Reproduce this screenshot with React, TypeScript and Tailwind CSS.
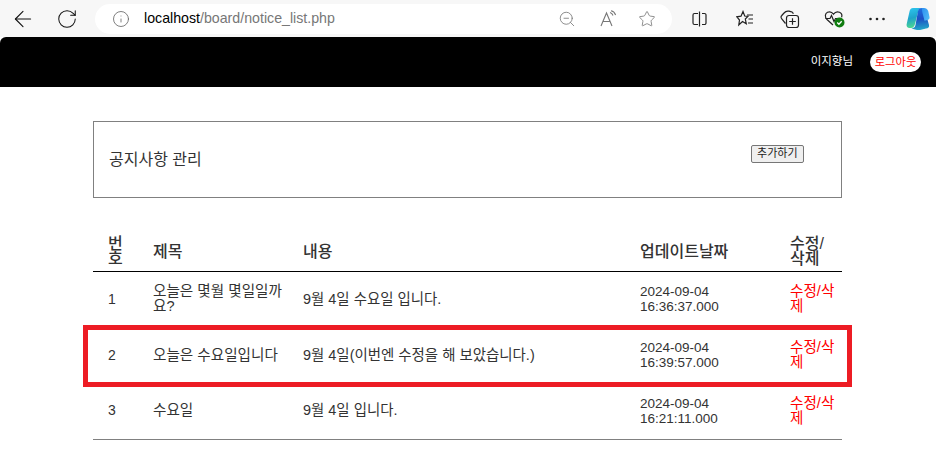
import React from 'react';
import { ArrowLeft, RotateCw, Info, ZoomOut, Star } from 'lucide-react';

const rows = [
  { no: 1, title: '오늘은 몇월 몇일일까요?', body: '9월 4일 수요일 입니다.', date: '2024-09-04', time: '16:36:37.000' },
  { no: 2, title: '오늘은 수요일입니다', body: '9월 4일(이번엔 수정을 해 보았습니다.)', date: '2024-09-04', time: '16:39:57.000' },
  { no: 3, title: '수요일', body: '9월 4일 입니다.', date: '2024-09-04', time: '16:21:11.000' },
];

const ReadAloudIcon = () => (
  <svg width="17" height="17" viewBox="0 0 17 17" fill="none" stroke="#777" strokeWidth="1.1">
    <path d="M1 16 6.500 3 12 16M3 11.500h7" />
    <path d="M10 2.500c1.500.4 2.500 1.500 3 3M11 .8c2.300.5 3.900 2 4.600 4.200" />
  </svg>
);

const SplitIcon = () => (
  <svg width="15" height="16" viewBox="0 0 15 16" fill="none" stroke="#222" strokeWidth="1.200">
    <path d="M6 2.500H2.500A1.500 1.500 0 0 0 1 4v8a1.500 1.500 0 0 0 1.500 1.500H6" />
    <path d="M10 2.500h2.500A1.500 1.500 0 0 1 14 4v8a1.500 1.500 0 0 1-1.500 1.500H10" />
    <path d="M7.500 .5v15" />
  </svg>
);

const FavoritesIcon = () => (
  <svg width="18" height="18" viewBox="0 0 18 18" fill="none" stroke="#222" strokeWidth="1.200">
    <path d="M7 1.500 8.700 6 12 6.300 9.300 9l1 4.700L6.500 11.500 2.800 15l.7-5L.8 6.800l4.200-.6z" />
    <path d="M11 5h6M12.500 9H17M12 13h5" />
  </svg>
);

const CollectionsIcon = () => (
  <svg width="20" height="20" viewBox="0 0 20 20" fill="none" stroke="#222" strokeWidth="1.200">
    <path d="M5.500 14.500 1.800 10c-1-1.300-1-2.500 0-3.500L4 4c1-1.200 3-2.200 5-1.800l2.500.6c1 .3 1.500 1 1.800 2" />
    <rect x="6.500" y="6.500" width="12" height="12" rx="2.500" />
    <path d="M12.500 9.200v6.600M9.200 12.500h6.600" />
  </svg>
);

const HealthIcon = () => (
  <svg width="22" height="20" viewBox="0 0 22 20" fill="none">
    <path d="M9 16 3 10.500C.5 8 1 4.500 3.500 3.300c2.200-1 4.500-.2 6 1.900 1.500-2.100 3.800-2.900 6-1.900 1.900.9 2.800 3 2.100 5" stroke="#222" strokeWidth="1.200" />
    <path d="M1.500 9.500H6l1.500-3 2.500 6 1.500-3h2" stroke="#222" strokeWidth="1.200" />
    <circle cx="15.500" cy="13.500" r="5" fill="#107c10" />
    <path d="m13.200 13.500 1.700 1.700 2.800-3" stroke="#fff" strokeWidth="1.300" />
  </svg>
);

const MoreIcon = () => (
  <svg width="18" height="18" viewBox="0 0 18 18" fill="#222">
    <circle cx="2.500" cy="9" r="1.300" />
    <circle cx="9" cy="9" r="1.300" />
    <circle cx="15.500" cy="9" r="1.300" />
  </svg>
);

const CopilotIcon = () => (
  <svg width="24" height="24" viewBox="0 0 24 24">
    <defs>
      <linearGradient id="cpA" x1="0.3" y1="0" x2="0.5" y2="1">
        <stop offset="0" stopColor="#2cc4ee" />
        <stop offset="0.5" stopColor="#1fa3c9" />
        <stop offset="1" stopColor="#4fdc8c" />
      </linearGradient>
      <linearGradient id="cpB" x1="0.4" y1="0" x2="0.5" y2="1">
        <stop offset="0" stopColor="#1e6fe0" />
        <stop offset="0.5" stopColor="#1c4fc4" />
        <stop offset="1" stopColor="#22a8c8" />
      </linearGradient>
      <linearGradient id="cpC" x1="0" y1="0" x2="1" y2="0.6">
        <stop offset="0" stopColor="#2b8ef0" />
        <stop offset="1" stopColor="#4fb8f5" />
      </linearGradient>
    </defs>
    <path d="M7 1h8c-1.500.4-2.300 1.700-2.700 3.200L9 17c-.6 2.200-1.600 4-4 4H3.500C1.500 21 .4 19.500.6 17.500L3.500 4.500C4 2.300 5 1 7 1z" fill="url(#cpA)" />
    <path d="M12 4c.5-1.800 1.600-3 3.500-3 1.800 0 3 1 3.500 3l4 14c.5 2-.8 3.500-3 3.500l-6 1.500c-3 .2-6-.5-8.500-2 2.500.5 3.500-1 4-3z" fill="url(#cpB)" />
    <path d="M15.500 1H18c1.800 0 3.500 1 4.200 3l1.300 6c.3 1.500-.5 2.500-2 3l-3 .8L16.500 6c-.5-2-.4-4-1-5z" fill="url(#cpC)" />
  </svg>
);

const Toolbar = () => (
  <div className="flex h-[37px] items-center bg-[#f7f7f7]">
    <div className="flex w-[95px] shrink-0 items-center pl-[10px]">
      <ArrowLeft size={26} strokeWidth={1} className="text-[#111]" />
      <RotateCw size={22} strokeWidth={1.100} className="ml-[20px] text-[#111]" />
    </div>
    <div className="flex h-[30px] w-[577px] shrink-0 items-center rounded-full bg-white pl-[17px]">
      <Info size={18} strokeWidth={1.100} className="text-[#666]" />
      <span className="ml-[14px] text-[14.200px] text-[#777]">
        <span className="text-black">localhost</span>/board/notice_list.php
      </span>
      <div className="ml-auto mr-[16px] flex items-center text-[#777]">
        <ZoomOut size={18} strokeWidth={1.100} />
        <span className="ml-[24px]"><ReadAloudIcon /></span>
        <Star size={18} strokeWidth={1.100} className="ml-[21px]" />
      </div>
    </div>
    <div className="ml-[20px] flex items-center">
      <SplitIcon />
      <span className="ml-[29px]"><FavoritesIcon /></span>
      <span className="ml-[26px]"><CollectionsIcon /></span>
      <span className="ml-[24px]"><HealthIcon /></span>
      <span className="ml-[22px]"><MoreIcon /></span>
      <span className="ml-[20px]"><CopilotIcon /></span>
    </div>
  </div>
);

export default function App() {
  return (
    <div
      className="relative h-[458px] w-[936px] overflow-hidden bg-white text-[#333]"
      style={{ fontFamily: '"Liberation Sans", "Noto Sans CJK KR", sans-serif' }}
    >
      <Toolbar />

      <header className="flex h-[50px] items-center justify-end rounded-t-[6px] bg-black pr-[15px]">
        <span className="text-[11.500px] text-white">이지향님</span>
        <button className="ml-[17px] h-[20px] w-[51px] rounded-full bg-white text-[11.300px] text-[#ff0000]">로그아웃</button>
      </header>

      <main className="mx-[93px] w-[749px] pt-[34px]">
        <section className="flex h-[77px] items-center border border-[#808080] pl-[15px]">
          <h2 className="text-[16px] font-normal">공지사항 관리</h2>
          <button className="ml-[549px] -mt-[12px] h-[18px] w-[53px] rounded-[2px] border border-[#767676] bg-[#efefef] text-[11px] leading-none text-[#222]">
            추가하기
          </button>
        </section>

        <table className="mt-[34px] w-full table-fixed border-collapse text-[14.600px] leading-[15px]">
          <colgroup>
            <col className="w-[60px]" />
            <col className="w-[150px]" />
            <col className="w-[337px]" />
            <col className="w-[150px]" />
            <col className="w-[52px]" />
          </colgroup>
          <thead>
            <tr className="h-[39px] border-b border-black text-left text-[16px]">
              <th className="pl-[15px] pr-[30px] align-middle font-medium">번호</th>
              <th className="font-medium">제목</th>
              <th className="font-medium">내용</th>
              <th className="font-medium">업데이트날짜</th>
              <th className="font-medium">
                수정/
                <br />
                삭제
              </th>
            </tr>
          </thead>
          <tbody className="border-b border-[#808080]">
            {rows.map((row) => (
              <tr key={row.no} className="h-[56px]">
                <td className="pl-[15px] text-[14px]">{row.no}</td>
                <td className="pr-[20px]">{row.title}</td>
                <td className="text-[14.450px]">{row.body}</td>
                <td className="text-[13.500px]">
                  {row.date}
                  <br />
                  {row.time}
                </td>
                <td className="text-[#ff0000]">수정/삭제</td>
              </tr>
            ))}
          </tbody>
        </table>
      </main>

      {/* annotation drawn over the screenshot */}
      <div className="absolute left-[83px] top-[325px] h-[62px] w-[769px] border-[5px] border-[#ed1c24]" />
    </div>
  );
}
